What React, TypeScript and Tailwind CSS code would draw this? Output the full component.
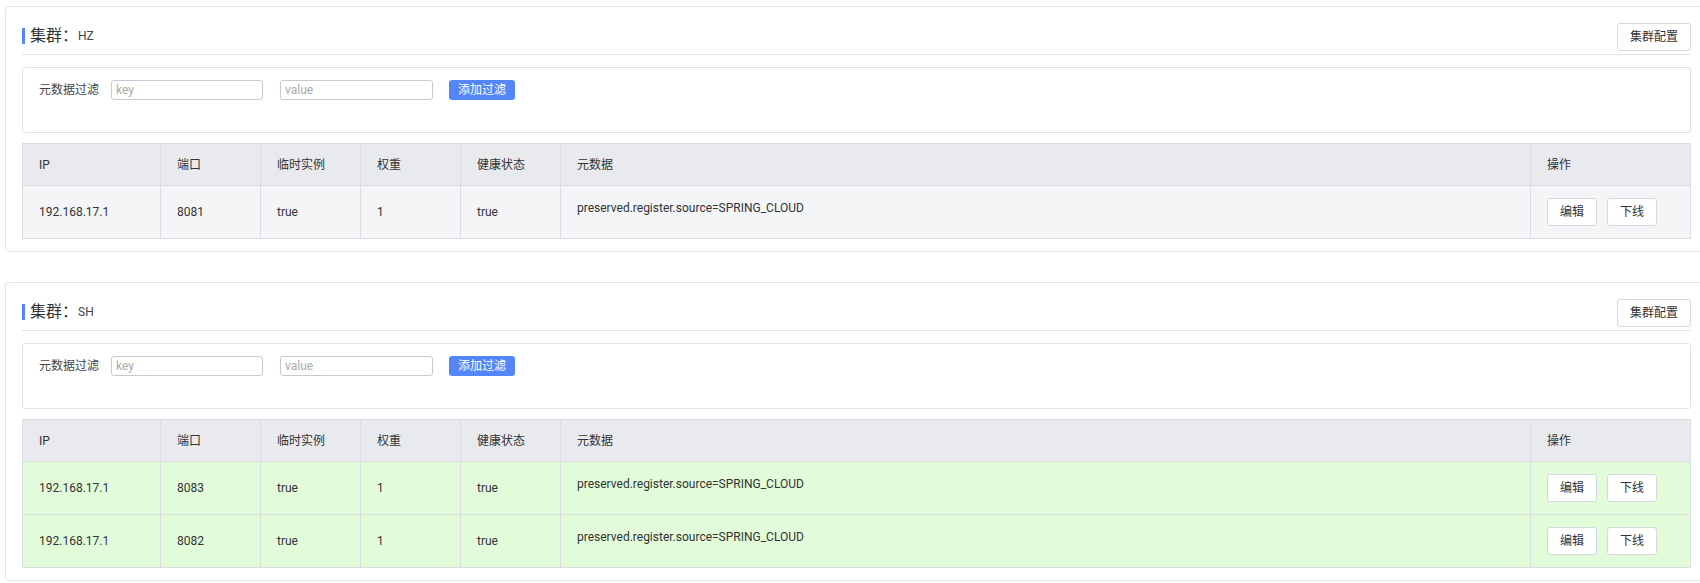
import React from "react";

type Instance = {
  ip: string;
  port: string;
  ephemeral: string;
  weight: string;
  healthy: string;
  metadata: string;
};

type Cluster = {
  name: string;
  rowBg: string;
  instances: Instance[];
};

const clusters: Cluster[] = [
  {
    name: "HZ",
    rowBg: "bg-[#f4f5f7]",
    instances: [
      { ip: "192.168.17.1", port: "8081", ephemeral: "true", weight: "1", healthy: "true", metadata: "preserved.register.source=SPRING_CLOUD" },
    ],
  },
  {
    name: "SH",
    rowBg: "bg-[#e2fcda]",
    instances: [
      { ip: "192.168.17.1", port: "8083", ephemeral: "true", weight: "1", healthy: "true", metadata: "preserved.register.source=SPRING_CLOUD" },
      { ip: "192.168.17.1", port: "8082", ephemeral: "true", weight: "1", healthy: "true", metadata: "preserved.register.source=SPRING_CLOUD" },
    ],
  },
];

const headers = ["IP", "端口", "临时实例", "权重", "健康状态", "元数据", "操作"];
const colWidths = ["w-[138px]", "w-[100px]", "w-[100px]", "w-[100px]", "w-[100px]", "", "w-[160px]"];

function SmallButton({ children }: { children: React.ReactNode }) {
  return (
    <button className="h-[28px] w-[50px] rounded-[3px] border border-[#d5d8de] bg-white text-[12px] text-[#333]">
      {children}
    </button>
  );
}

function ClusterCard({ cluster }: { cluster: Cluster }) {
  return (
    <div className="w-[1703px] rounded-[4px] border border-[#e3e4e8] bg-white px-[16px] pt-[16px] pb-[12px]">
      {/* title */}
      <div className="flex items-start justify-between border-b border-[#e3e4e8] pb-[3px]">
        <div className="flex items-center pt-[5px]">
          <span className="h-[16px] w-[3px] bg-[#5586f8]" />
          <span className="ml-[5px] text-[16px] leading-[16px] text-[#333]">集群：</span>
          <span className="text-[12px] leading-[16px] text-[#444]">{cluster.name}</span>
        </div>
        <button className="h-[28px] w-[74px] rounded-[3px] border border-[#d5d8de] bg-white text-[12px] text-[#333]">
          集群配置
        </button>
      </div>

      {/* filter */}
      <div className="mt-[12px] h-[66px] rounded-[3px] border border-[#e0e1e6] px-[16px] pt-[12px]">
        <div className="flex items-center">
          <span className="text-[12px] text-[#444]">元数据过滤</span>
          <input
            placeholder="key"
            className="ml-[12px] h-[20px] w-[152px] rounded-[3px] border border-[#c8cad1] px-[4px] text-[12px] outline-none placeholder:text-[#aaa]"
          />
          <input
            placeholder="value"
            className="ml-[17px] h-[20px] w-[153px] rounded-[3px] border border-[#c8cad1] px-[4px] text-[12px] outline-none placeholder:text-[#aaa]"
          />
          <button className="ml-[16px] h-[20px] w-[66px] rounded-[3px] bg-[#5586f8] text-[12px] text-white">
            添加过滤
          </button>
        </div>
      </div>

      {/* instances */}
      <table className="mt-[10px] w-full table-fixed border-collapse text-[12px] text-[#333]">
        <thead>
          <tr className="bg-[#e9eaee]">
            {headers.map((h, i) => (
              <th key={h} className={`${colWidths[i]} h-[42px] border border-[#dcdde2] px-[16px] text-left font-normal`}>
                {h}
              </th>
            ))}
          </tr>
        </thead>
        <tbody>
          {cluster.instances.map((ins) => (
            <tr key={ins.port} className={cluster.rowBg}>
              <td className="h-[53px] border border-[#dcdde2] px-[16px]">{ins.ip}</td>
              <td className="border border-[#dcdde2] px-[16px]">{ins.port}</td>
              <td className="border border-[#dcdde2] px-[16px]">{ins.ephemeral}</td>
              <td className="border border-[#dcdde2] px-[16px]">{ins.weight}</td>
              <td className="border border-[#dcdde2] px-[16px]">{ins.healthy}</td>
              <td className="border border-[#dcdde2] px-[16px]">
                <div className="-mt-[8px]">{ins.metadata}</div>
              </td>
              <td className="border border-[#dcdde2] px-[16px]">
                <div className="flex gap-[10px]">
                  <SmallButton>编辑</SmallButton>
                  <SmallButton>下线</SmallButton>
                </div>
              </td>
            </tr>
          ))}
        </tbody>
      </table>
    </div>
  );
}

export default function App() {
  return (
    <div
      className="h-[583px] w-[1700px] overflow-hidden bg-white pl-[5px] pt-[6px]"
      style={{ fontFamily: 'Roboto, "Noto Sans CJK SC", sans-serif' }}
    >
      <div className="flex flex-col gap-[30px]">
        {clusters.map((c) => (
          <ClusterCard key={c.name} cluster={c} />
        ))}
      </div>
    </div>
  );
}
